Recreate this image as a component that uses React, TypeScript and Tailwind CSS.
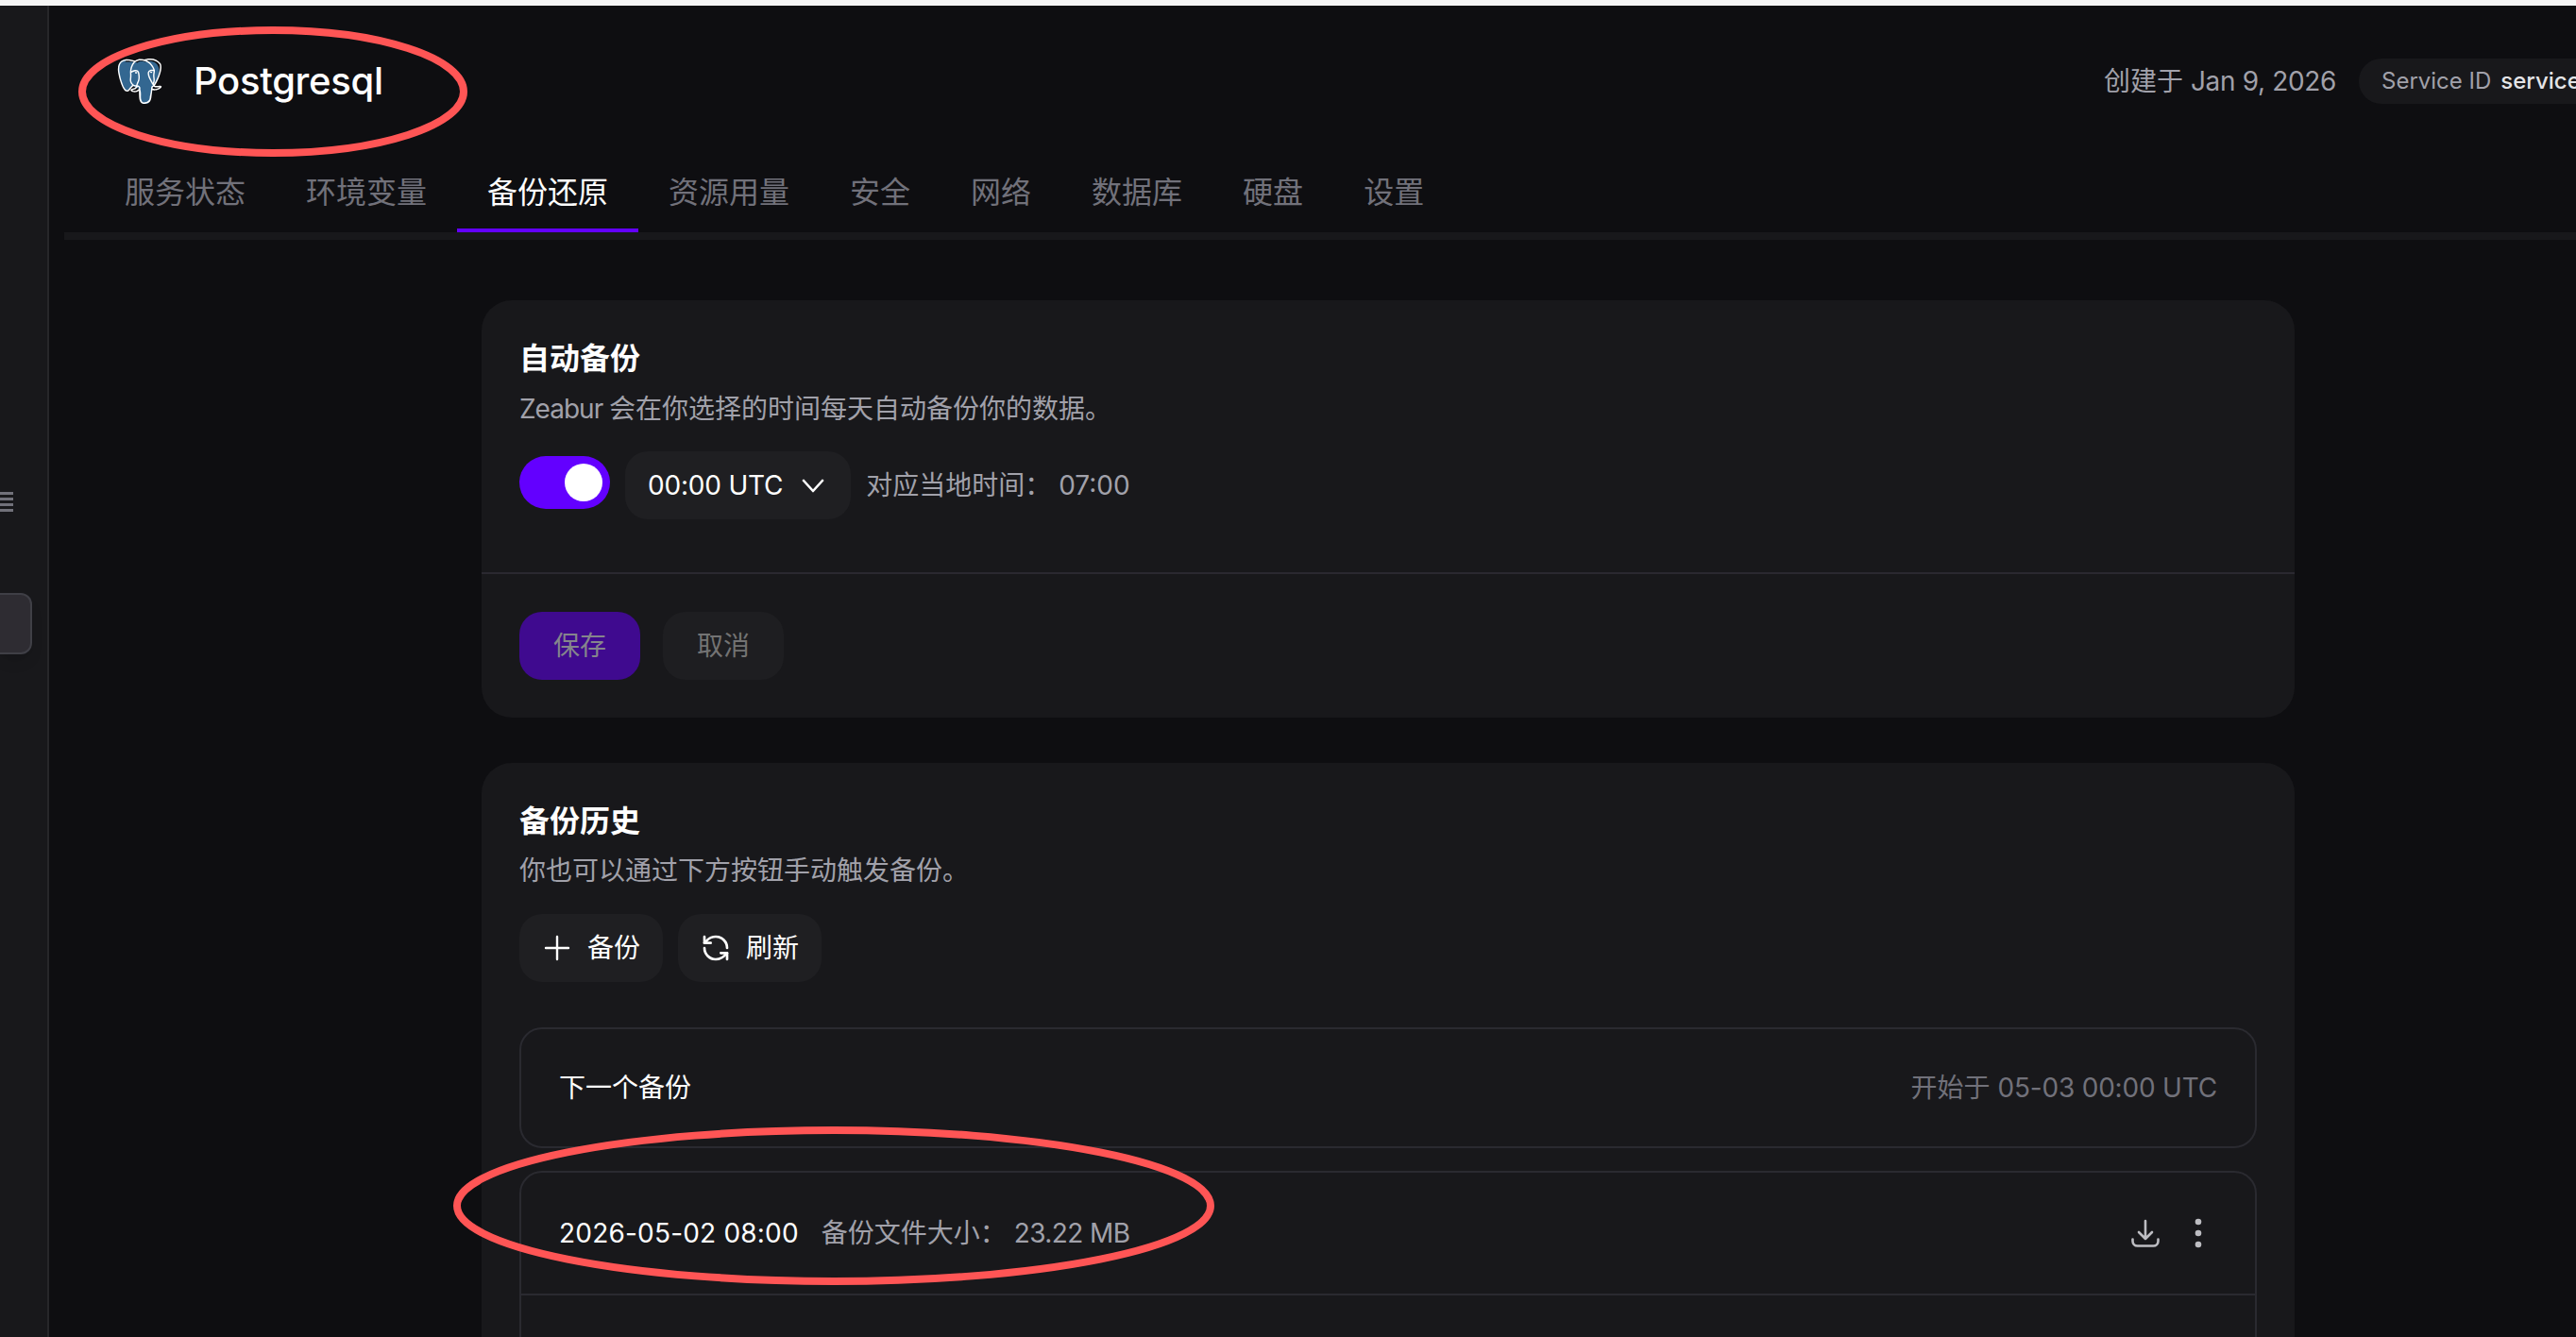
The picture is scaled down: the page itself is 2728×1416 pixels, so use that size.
import { RefreshCcw } from "lucide-react"
import { SiPostgresql } from "react-icons/si"

const tabs = ["服务状态", "环境变量", "备份还原", "资源用量", "安全", "网络", "数据库", "硬盘", "设置"]

function PostgresLogo() {
  return (
    <div className="relative w-[48px] h-[48px] shrink-0">
      <svg viewBox="0 0 48 48" className="absolute inset-0 w-full h-full">
        <path d="M10 1C4 1 1 5 1 11c0 6 5 19 7 22 2 2 3 1 5-1l3-3 7 3 1 8c0 5 2 9 6 8.500 4-.5 5-3 5.500-7l1-7 2-5c4-6 6-13 6-17 0-2-1-6-4-8-3-2-8-2-11-1-3-1-6-1-8 1-2-1-5-1-7-1-2 0-4 0-6 0z" fill="#336791" />
      </svg>
      <SiPostgresql className="absolute inset-0 w-full h-full text-white" />
    </div>
  )
}

function DownloadIcon() {
  return (
    <svg viewBox="0 0 32 32" className="w-8 h-8" fill="none" stroke="#bdbdc2" strokeWidth="2.6" strokeLinecap="round" strokeLinejoin="round">
      <path d="M16 3v19M9 15l7 7 7-7" />
      <path d="M2.500 22.500v2a5 5 0 0 0 5 5h17a5 5 0 0 0 5-5v-2" />
    </svg>
  )
}

export default function App() {
  return (
    <div className="relative w-full h-[1416px] overflow-hidden bg-[#0e0e11] font-['Inter','Noto_Sans_CJK_SC',sans-serif] text-[28px] leading-[40px]">
      <div className="h-[6px] bg-[#f5f5f5]" />
      <div className="flex h-[1410px]">
        {/* sidebar, cut off on the left */}
        <div className="w-[52px] shrink-0 bg-[#18181b] border-r-2 border-[#27272a]">
          <div className="mt-[515px] w-[14px] flex flex-col gap-[3px]">
            <div className="h-[3px] bg-[#71717a]" />
            <div className="h-[3px] bg-[#71717a]" />
            <div className="h-[3px] bg-[#71717a]" />
            <div className="h-[3px] bg-[#71717a]" />
          </div>
          <div className="mt-[86px] w-[34px] h-[65px] bg-[#2e2c32] border-2 border-l-0 border-[#3f3f46] rounded-r-xl shadow-lg" />
        </div>

        <div className="flex-1 min-w-0">
          <div className="mt-[56px] h-[48px] flex items-center pl-[72px]">
            <PostgresLogo />
            <div className="ml-[33px] text-[40px] leading-[48px] tracking-[-0.3px] font-medium text-white">Postgresql</div>
            <div className="ml-auto mr-[-24px] flex items-center gap-6">
              <div className="text-[#a1a1aa]">
                创建于 <span className="tracking-[-0.35px]">Jan 9, 2026</span>
              </div>
              <div className="h-[48px] w-[254px] pl-6 rounded-full bg-[#18181b] flex items-center gap-[10px] text-[24px] whitespace-nowrap">
                <span className="text-[#a1a1aa]">Service ID</span>
                <span className="text-[#e4e4e7] font-medium">service</span>
              </div>
            </div>
          </div>

          <div className="mt-[74px] ml-4 pl-8 flex border-b-8 border-[#18181b]">
            {tabs.map((t) => (
              <div
                key={t}
                className={
                  t === "备份还原"
                    ? "px-8 pb-[18px] text-[32px] leading-[40px] text-white border-b-4 border-[#6300ff]"
                    : "px-8 pb-[18px] text-[32px] leading-[40px] text-[#71717a] border-b-4 border-transparent"
                }
              >
                {t}
              </div>
            ))}
          </div>

          <div className="ml-[458px] w-[1920px] mt-16 flex flex-col gap-12">
            <div className="rounded-[32px] bg-[#18181b]">
              <div className="px-10 pt-10 pb-[56px]">
                <div className="text-[32px] leading-[44px] font-semibold text-white">自动备份</div>
                <div className="mt-[11px] text-[#a1a1aa]">
                  <span className="tracking-[-1px]">Zeabur </span>会在你选择的时间每天自动备份你的数据。
                </div>
                <div className="mt-[25px] flex items-center gap-4">
                  <div className="w-[96px] h-[56px] mb-[6px] rounded-full bg-[#6300ff] flex items-center justify-end pr-2">
                    <div className="w-10 h-10 rounded-full bg-white" />
                  </div>
                  <div className="h-[72px] px-6 rounded-3xl bg-[#1f1f22] flex items-center gap-4 text-white">
                    <span className="tracking-[-0.2px]">00:00 UTC</span>
                    <svg viewBox="0 0 32 32" className="w-8 h-8" fill="none" stroke="white" strokeWidth="2.6" strokeLinecap="round" strokeLinejoin="round">
                      <path d="M6 11l10 11 10-11" />
                    </svg>
                  </div>
                  <div className="text-[#a1a1aa]">对应当地时间：&nbsp;07:00</div>
                </div>
              </div>
              <div className="border-t-2 border-[#2a2830] p-10 flex gap-6">
                <div className="h-[72px] px-6 rounded-3xl flex items-center w-[128px] justify-center bg-[#3f0a8f] text-[#85858c]">保存</div>
                <div className="h-[72px] px-6 rounded-3xl flex items-center w-[128px] justify-center bg-[#1e1e21] text-[#737373]">取消</div>
              </div>
            </div>

            <div className="rounded-[32px] bg-[#18181b] px-10 pt-10 pb-10">
              <div className="text-[32px] leading-[44px] font-semibold text-white">备份历史</div>
              <div className="mt-[10px] text-[#a1a1aa]">你也可以通过下方按钮手动触发备份。</div>
              <div className="mt-[26px] flex gap-4">
                <div className="h-[72px] px-6 rounded-3xl bg-[#1f1f22] flex items-center gap-4 text-white">
                  <svg viewBox="0 0 32 32" className="w-8 h-8" fill="none" stroke="white" strokeWidth="2.4" strokeLinecap="round">
                    <path d="M16 4v24M4 16h24" />
                  </svg>
                  <span>备份</span>
                </div>
                <div className="h-[72px] px-6 rounded-3xl bg-[#1f1f22] flex items-center gap-4 text-white">
                  <RefreshCcw size={32} strokeWidth={2} />
                  <span>刷新</span>
                </div>
              </div>

              <div className="mt-12 h-[128px] px-10 rounded-3xl border-2 border-[#2a2a30] flex items-center justify-between">
                <span className="text-white">下一个备份</span>
                <span className="text-[#71717a]">
                  开始于 <span className="tracking-[-0.2px]">05-03 00:00 UTC</span>
                </span>
              </div>

              <div className="mt-6 rounded-3xl border-2 border-[#2a2a30]">
                <div className="h-[130px] pl-10 pr-[44px] flex items-center justify-between border-b-2 border-[#2a2a30]">
                  <div className="flex items-center gap-6">
                    <span className="text-white tracking-[0.2px]">2026-05-02 08:00</span>
                    <span className="text-[#a1a1aa]">
                      备份文件大小：&nbsp;<span className="tracking-[-0.6px]">23.22 MB</span>
                    </span>
                  </div>
                  <div className="flex items-center gap-6">
                    <DownloadIcon />
                    <svg viewBox="0 0 32 32" className="w-8 h-8" fill="#bdbdc2">
                      <circle cx="16" cy="4" r="3.300" />
                      <circle cx="16" cy="16" r="3.300" />
                      <circle cx="16" cy="28" r="3.300" />
                    </svg>
                  </div>
                </div>
                <div className="h-[130px]" />
              </div>
            </div>
          </div>
        </div>
      </div>

      {/* red annotation rings drawn over the screenshot */}
      <svg className="absolute inset-0 w-full h-full pointer-events-none" fill="none" stroke="#ff5555">
        <ellipse cx="289" cy="97" rx="202" ry="65" strokeWidth="8" />
        <ellipse cx="883" cy="1277" rx="399" ry="80" strokeWidth="8" />
      </svg>
    </div>
  )
}
